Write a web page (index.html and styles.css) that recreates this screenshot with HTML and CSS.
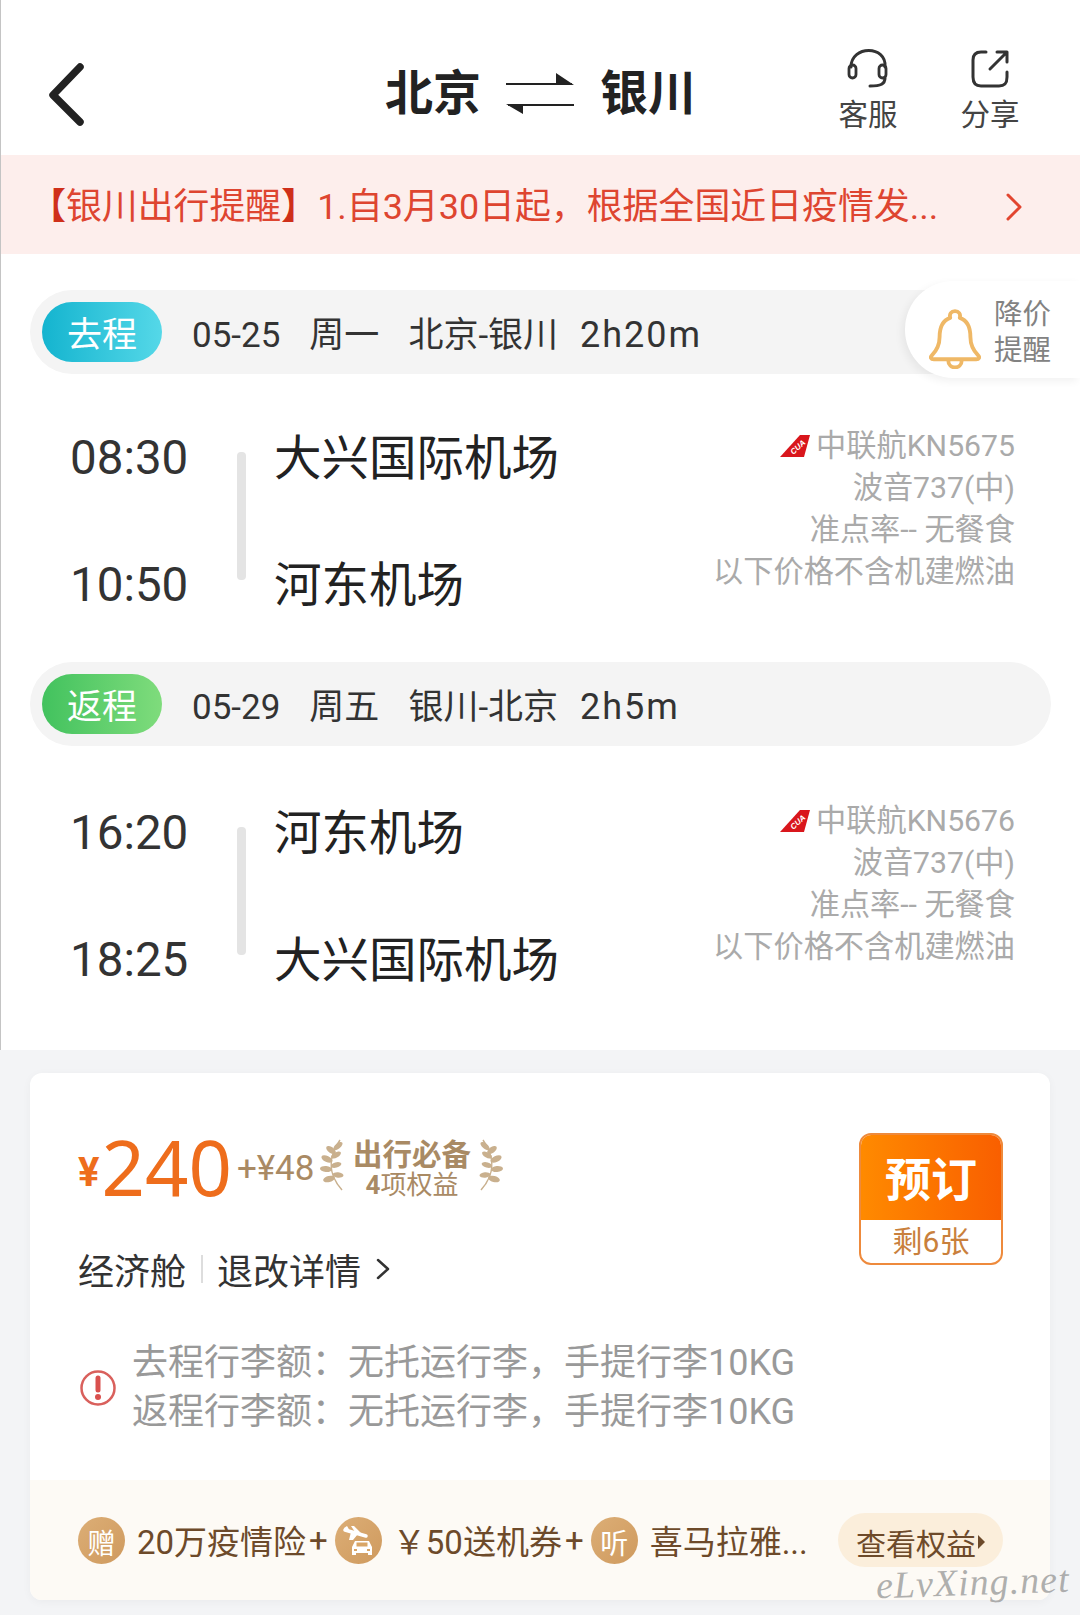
FILE: index.html
```html
<!DOCTYPE html>
<html lang="zh">
<head>
<meta charset="utf-8">
<title>北京 银川</title>
<link rel="stylesheet" href="styles.css">
</head>
<body>
<div class="page">
  <div class="top">
    <header class="header">
      <svg class="back" viewBox="0 0 40 64" width="40" height="64"><path d="M33 5 L6 33 L33 60" fill="none" stroke="#222" stroke-width="7.5" stroke-linecap="round" stroke-linejoin="round"/></svg>
      <div class="title">
        <span>北京</span>
        <svg class="swap" viewBox="0 0 68 44" width="68" height="44"><path d="M0 11 H66 V13 H0 Z M50 1 L68 13 H50 Z M2 32 H68 V34 H2 Z M0 32 H17 V42 Z" fill="#222"/></svg>
        <span>银川</span>
      </div>
      <div class="actions">
        <div class="action">
          <svg viewBox="0 0 44 42" width="44" height="42"><path d="M5 19 C5 -3 41 -3 39 19 M39 30 C39 36 35 38 24 38" fill="none" stroke="#333" stroke-width="3" stroke-linecap="round"/><rect x="3" y="17" width="7" height="13" rx="3.5" fill="none" stroke="#333" stroke-width="2.8"/><rect x="33" y="17" width="7" height="13" rx="3.5" fill="none" stroke="#333" stroke-width="2.8"/></svg>
          <span>客服</span>
        </div>
        <div class="action">
          <svg viewBox="0 0 40 42" width="40" height="42"><path d="M16 4 H11 C5 4 3 7 3 12 V29 C3 35 6 38 11 38 H29 C35 38 37 35 37 29 V24 M20 21 L37 4 M27 4 H37 V14" fill="none" stroke="#333" stroke-width="3" stroke-linecap="round" stroke-linejoin="round"/></svg>
          <span>分享</span>
        </div>
      </div>
    </header>
    <div class="notice">
      <span class="notice-text"><b class="bracket">【</b>银川出行提醒<b class="bracket">】</b>1.自3月30日起，根据全国近日疫情发...</span>
      <svg viewBox="0 0 16 28" width="16" height="28"><path d="M2 2 L14 14 L2 26" fill="none" stroke="#e2452f" stroke-width="3" stroke-linecap="round" stroke-linejoin="round"/></svg>
    </div>
    <section class="leg leg-first">
      <div class="bar">
        <span class="pill pill-go">去程</span>
        <span class="date">05-25</span><span class="date">周一</span><span class="route">北京-银川</span><span class="dur">2h20m</span>
      </div>
      <div class="alert">
        <svg viewBox="0 0 54 62" width="52" height="60"><path d="M27 2 C23 2 21 5 22 9 C13 12 11 20 11 29 C11 38 8 43 3 48 C1 50 2 52 5 52 H49 C52 52 53 50 51 48 C46 43 43 38 43 29 C43 20 41 12 32 9 C33 5 31 2 27 2 Z M20 53 C20 63 34 63 34 53" fill="none" stroke="#efb866" stroke-width="4" stroke-linejoin="round"/></svg>
        <div class="alert-text">降价<br>提醒</div>
      </div>
      <div class="flight">
        <div class="times"><span>08:30</span><span>10:50</span></div>
        <div class="track"></div>
        <div class="airports"><span>大兴国际机场</span><span>河东机场</span></div>
        <div class="info">
          <div class="carrier">
            <svg viewBox="0 0 30 24" width="30" height="26"><polygon points="0,23 20,1 30,1 24,23" fill="#d9161c"/><text x="9" y="18" class="tail" transform="rotate(-42 15 14)">CUA</text></svg>
            <span>中联航KN5675</span>
          </div>
          <div>波音737(中)</div>
          <div>准点率-- 无餐食</div>
          <div>以下价格不含机建燃油</div>
        </div>
      </div>
    </section>
    <section class="leg">
      <div class="bar">
        <span class="pill pill-back">返程</span>
        <span class="date">05-29</span><span class="date">周五</span><span class="route">银川-北京</span><span class="dur">2h5m</span>
      </div>
      <div class="flight flight-back">
        <div class="times"><span>16:20</span><span>18:25</span></div>
        <div class="track"></div>
        <div class="airports"><span>河东机场</span><span>大兴国际机场</span></div>
        <div class="info">
          <div class="carrier">
            <svg viewBox="0 0 30 24" width="30" height="26"><polygon points="0,23 20,1 30,1 24,23" fill="#d9161c"/><text x="9" y="18" class="tail" transform="rotate(-42 15 14)">CUA</text></svg>
            <span>中联航KN5676</span>
          </div>
          <div>波音737(中)</div>
          <div>准点率-- 无餐食</div>
          <div>以下价格不含机建燃油</div>
        </div>
      </div>
    </section>
  </div>
  <div class="lower">
    <div class="card">
      <div class="card-main">
        <div class="card-left">
          <div class="price-row">
            <span class="yen">¥</span><span class="price">240</span><span class="extra">+¥48</span>
            <svg class="laurel" viewBox="0 0 24 54" width="24" height="54"><use href="#laurel"/></svg>
            <div class="perk"><b>出行必备</b><span><b>4</b>项权益</span></div>
            <svg class="laurel laurel-r" viewBox="0 0 24 54" width="24" height="54"><use href="#laurel"/></svg>
          </div>
          <div class="cabin">
            <span>经济舱</span><i class="sep"></i><span>退改详情</span>
            <svg viewBox="0 0 14 24" width="14" height="24"><path d="M2 3 L12 12 L2 21" fill="none" stroke="#333" stroke-width="2.5" stroke-linecap="round" stroke-linejoin="round"/></svg>
          </div>
          <div class="baggage">
            <svg viewBox="0 0 36 36" width="36" height="36"><circle cx="18" cy="18" r="16.5" fill="none" stroke="#d9605c" stroke-width="2.5"/><path d="M18 8 V20" stroke="#d9504e" stroke-width="5" stroke-linecap="round"/><circle cx="18" cy="27" r="3" fill="#d9504e"/></svg>
            <div class="baggage-text">
              <div>去程行李额：无托运行李，手提行李10KG</div>
              <div>返程行李额：无托运行李，手提行李10KG</div>
            </div>
          </div>
        </div>
        <div class="book">
          <div class="book-top">预订</div>
          <div class="book-bottom">剩6张</div>
        </div>
      </div>
      <div class="strip">
        <span class="coin">赠</span><span class="strip-text">20万疫情险</span><span class="plus">+</span>
        <span class="coin coin-icon"><svg viewBox="0 0 47 47" width="47" height="47"><path d="M10 13 L31 19" fill="none" stroke="#fff" stroke-width="3.5" stroke-linecap="round"/><path d="M16 15 L23 17 L18 23 L14 23 Z M20 15 L16 9 L19 9 L26 16 Z M9 11 L12 9 L15 14 L10 14 Z" fill="#fff"/><path d="M17 30 L20 24 H34 L37 30 V38 H33 V36 H21 V38 H17 Z" fill="#fff"/><rect x="21.500" y="25.500" width="11" height="4" fill="#d9a566"/><rect x="19" y="32" width="3" height="2" fill="#d9a566"/><rect x="32" y="32" width="3" height="2" fill="#d9a566"/></svg></span><span class="strip-text strip-gift">￥50送机券</span><span class="plus">+</span>
        <span class="coin">听</span><span class="strip-text">喜马拉雅...</span>
        <span class="more">查看权益<i class="tri"></i></span>
      </div>
    </div>
    <span class="watermark">eLvXing.net</span>
  </div>
</div>
<svg class="defs" width="0" height="0"><defs>
  <g id="laurel" fill="#c9b08e">
    <path d="M20 2 C10 16 6 34 22 52" fill="none" stroke="#c9b08e" stroke-width="1.5"/>
    <ellipse cx="11" cy="12" rx="5.500" ry="2.900" transform="rotate(35 11 12)"/>
    <ellipse cx="18" cy="8" rx="5.500" ry="2.700" transform="rotate(-40 18 8)"/>
    <ellipse cx="7" cy="21" rx="6" ry="3" transform="rotate(25 7 21)"/>
    <ellipse cx="16" cy="17" rx="5.500" ry="2.700" transform="rotate(-30 16 17)"/>
    <ellipse cx="6" cy="31" rx="6" ry="3" transform="rotate(5 6 31)"/>
    <ellipse cx="16" cy="27" rx="5.500" ry="2.700" transform="rotate(-15 16 27)"/>
    <ellipse cx="9" cy="41" rx="6" ry="3" transform="rotate(-15 9 41)"/>
    <ellipse cx="18" cy="37" rx="5.500" ry="2.700" transform="rotate(5 18 37)"/>
  </g>
</defs></svg>
</body>
</html>
```

FILE: styles.css
```css
* { box-sizing: border-box; }
html, body { margin: 0; padding: 0; }
body {
  font-family: Roboto, "Noto Sans CJK SC", sans-serif;
  background: #f3f4f6;
  color: #333;
}
.page { width: 1080px; height: 1615px; overflow: hidden; position: relative; }
.top { background: #fff; height: 1050px; border-left: 1px solid #c4c4c4; }
.defs { position: absolute; }

.header { height: 155px; display: flex; align-items: flex-start; padding-left: 46px; }
.back { margin-top: 62px; }
.title { display: flex; align-items: center; margin-left: 298px; margin-top: 65px; height: 58px; font-size: 48px; font-weight: 700; color: #222; line-height: 58px; }
.swap { margin: 0 26px 0 25px; }
.actions { margin-left: auto; display: flex; padding-right: 60px; gap: 62px; margin-top: 48px; }
.action { display: flex; flex-direction: column; align-items: center; width: 60px; font-size: 29.5px; line-height: 40px; color: #444; }
.action svg { margin-bottom: 5px; }

.notice { height: 99px; background: #fdeeec; display: flex; align-items: center; justify-content: space-between; padding: 5px 58px 0 29px; color: #de4530; }
.notice-text { font-size: 35.9px; line-height: 44px; white-space: nowrap; }
.bracket { color: #cf2f1a; }

.leg { position: relative; }
.leg-first { padding-top: 36px; height: 408px; }
.bar { margin: 0 29px; height: 84px; border-radius: 42px; background: #f4f4f4; display: flex; align-items: baseline; padding: 12px 0 0 12px; font-size: 35px; color: #333; white-space: nowrap; }
.pill { width: 120px; height: 60px; border-radius: 30px; color: #fff; text-align: center; line-height: 68px; font-size: 35px; margin-right: 30px; flex: none; }
.pill-go { background: linear-gradient(90deg, #14b4cf, #55d8e8); }
.pill-back { background: linear-gradient(90deg, #42c25e, #7fdc7c); }
.date { margin-right: 29px; }
.route { margin-right: 22px; }
.dur { font-size: 36px; letter-spacing: 2px; }

.alert { position: absolute; right: 0; top: 27px; width: 175px; height: 97px; background: #fff; border-radius: 48px 0 0 48px; box-shadow: -3px 3px 8px rgba(0,0,0,.06); display: flex; align-items: center; padding-left: 24px; gap: 13px; }
.alert svg { margin-top: 18px; }
.alert-text { font-size: 28.5px; line-height: 36px; color: #828282; margin-top: 6px; }

.flight { display: flex; align-items: flex-start; padding: 52px 65px 0 69px; }
.flight-back { padding-top: 55px; }
.times { width: 167px; display: flex; flex-direction: column; gap: 63px; font-size: 47.5px; line-height: 64px; color: #333; flex: none; }
.track { width: 9px; height: 128px; border-radius: 4px; background: #e4e4e4; margin-top: 26px; flex: none; }
.airports { margin: 1px 0 0 28px; display: flex; flex-direction: column; gap: 63px; font-size: 47.5px; line-height: 64px; color: #222; white-space: nowrap; }
.info { margin-left: auto; margin-top: -1px; text-align: right; font-size: 30.2px; line-height: 42px; color: #aaa; white-space: nowrap; }
.carrier { display: flex; justify-content: flex-end; align-items: center; gap: 6px; height: 42px; }
.tail { font: italic 700 8px "Liberation Sans", sans-serif; fill: #fff; }

.lower { position: relative; padding-top: 23px; }
.card { margin: 0 30px; width: 1020px; height: 527px; background: #fff; border-radius: 12px; overflow: hidden; box-shadow: 0 2px 10px rgba(0,0,0,.04); }
.card-main { height: 407px; display: flex; justify-content: space-between; padding: 0 47px 0 48px; }
.card-left { padding-top: 52px; }
.price-row { display: flex; align-items: center; height: 80px; white-space: nowrap; }
.yen { color: #ee6d1c; font-size: 40px; font-weight: 700; margin-top: 14px; }
.price { color: #ee6d1c; font-size: 76px; line-height: 80px; font-family: "Noto Sans", sans-serif; margin: 3px 0 0 2px; }
.extra { color: #a98a64; font-size: 35px; margin: 6px 6px 0 5px; }
.perk { display: flex; flex-direction: column; align-items: center; width: 135px; margin-top: 9px; color: #a98a64; font-size: 26px; line-height: 30px; }
.perk b { font-size: 29.5px; }
.perk span b { font-size: 26px; }
.laurel-r { transform: scaleX(-1); }
.cabin { display: flex; align-items: center; margin-top: 40px; height: 48px; font-size: 36px; color: #333; white-space: nowrap; }
.sep { width: 2px; height: 28px; background: #ddd; margin: 0 14px 0 15px; }
.cabin svg { margin-left: 15px; }
.baggage { display: flex; align-items: center; margin-top: 46px; }
.baggage svg { margin-left: 2px; }
.baggage-text { margin-left: 16px; font-size: 36px; line-height: 49px; color: #999; white-space: nowrap; }

.book { width: 144px; height: 132px; margin-top: 60px; border: 2px solid #ee8a3c; border-radius: 12px; overflow: hidden; background: #fff; }
.book-top { height: 85px; background: linear-gradient(90deg, #ff8a00, #f95f00); color: #fff; text-align: center; font-size: 46px; font-weight: 700; line-height: 90px; }
.book-bottom { text-align: center; color: #c9803c; font-size: 30px; line-height: 44px; }

.strip { height: 120px; background: #fdfaf5; display: flex; align-items: center; padding: 0 47px 0 48px; white-space: nowrap; font-size: 33px; color: #6d4a2a; }
.coin { width: 47px; height: 47px; border-radius: 50%; background: linear-gradient(135deg, #dcae76, #cf9a5e); color: #fff; font-size: 28px; padding-top: 3px; flex: none; display: flex; align-items: center; justify-content: center; }
.coin-icon { padding-top: 0; }
.strip-text { margin-left: 12px; padding-top: 0; }
.plus { margin: 0 7px 0 3px; }
.strip-gift { margin-left: 11px; }
.more { margin-left: auto; width: 165px; height: 54px; border-radius: 27px; background: #fbeedb; display: flex; align-items: center; padding: 3px 0 0 18px; font-size: 30px; color: #6d4a2a; }
.tri { width: 0; height: 0; border-left: 7px solid #6d4a2a; border-top: 7px solid transparent; border-bottom: 7px solid transparent; margin-left: 2px; }
.watermark { position: absolute; right: 10px; bottom: -4px; font: italic 38px "Liberation Serif", serif; color: rgba(150,150,150,.75); letter-spacing: 1px; transform: rotate(-2deg); }
```
